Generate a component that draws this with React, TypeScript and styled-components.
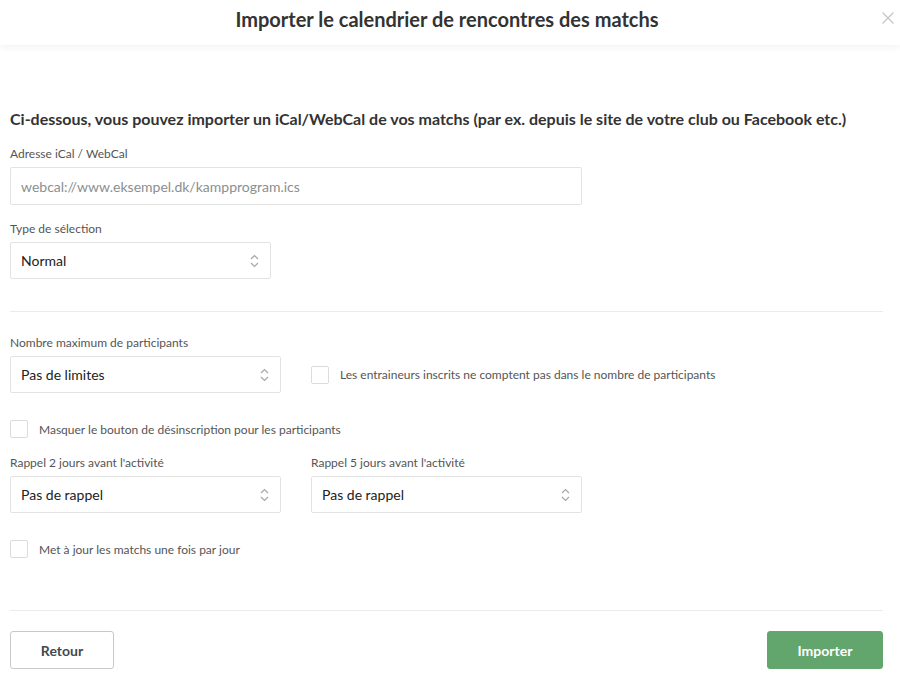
import React from "react";
import styled, { createGlobalStyle } from "styled-components";

const Global = createGlobalStyle`
  html, body { margin: 0; padding: 0; background: #fff; }
  body { font-family: Lato, "Open Sans", sans-serif; color: #333; }
  * { box-sizing: border-box; }
`;

const Modal = styled.div`
  width: 900px;
  display: flex;
  flex-direction: column;
  background: #fff;
`;

const Header = styled.header`
  position: relative;
  flex: none;
  height: 45px;
  padding: 0 6px 8px 0;
  display: flex;
  align-items: center;
  justify-content: center;
  box-shadow: 0 2px 8px rgba(0, 0, 0, 0.06);
  z-index: 1;
`;

const Title = styled.h1`
  margin: 0;
  font-size: 20px;
  line-height: 24px;
  font-weight: 700;
  color: #333;
`;

const Close = styled.button`
  position: absolute;
  right: 4px;
  top: 11px;
  width: 16px;
  height: 16px;
  padding: 0;
  border: none;
  background: none;
  cursor: pointer;
`;

const Body = styled.div`
  padding: 64px 17px 0 10px;
  display: flex;
  flex-direction: column;
`;

const Intro = styled.h2`
  margin: 0 0 18px;
  font-size: 16px;
  font-weight: 700;
  color: #333;
  line-height: 20px;
`;

const Field = styled.div<{ $w?: number }>`
  display: flex;
  flex-direction: column;
  width: ${(p) => (p.$w ? `${p.$w}px` : "auto")};
`;

const Label = styled.label`
  font-size: 12px;
  color: #555;
  line-height: 14px;
  margin-bottom: 6px;
`;

const TextInput = styled.input`
  height: 38px;
  border: 1px solid #e3e3e3;
  border-radius: 2px;
  padding: 0 10px;
  font-family: inherit;
  font-size: 14px;
  color: #333;
  outline: none;
  &::placeholder { color: #8a8f92; }
`;

const SelectBox = styled.div`
  position: relative;
  height: 37px;
  border: 1px solid #e3e3e3;
  border-radius: 2px;
  display: flex;
  align-items: center;
  padding: 0 10px;
  font-size: 14px;
  color: #222;
`;

const Arrows = styled.svg`
  position: absolute;
  right: 11px;
  top: 50%;
  transform: translateY(-50%);
`;

const Row = styled.div<{ $gap?: number; $align?: string }>`
  display: flex;
  gap: ${(p) => p.$gap ?? 30}px;
  align-items: ${(p) => p.$align ?? "flex-start"};
`;

const Divider = styled.hr`
  border: none;
  border-top: 1px solid #ebebeb;
  margin: 0;
`;

const Check = styled.label<{ $h?: number }>`
  display: flex;
  align-items: center;
  gap: 11px;
  height: ${(p) => (p.$h ? `${p.$h}px` : "auto")};
  font-size: 12px;
  color: #555;
  cursor: pointer;
`;

const Box = styled.span`
  width: 18px;
  height: 18px;
  border: 1px solid #dcdcdc;
  border-radius: 2px;
  background: #fff;
  flex: none;
`;

const Spacer = styled.div<{ $h: number }>`
  height: ${(p) => p.$h}px;
  flex: none;
`;

const Footer = styled.div`
  display: flex;
  justify-content: space-between;
  padding: 20px 17px 9px 10px;
`;

const Button = styled.button<{ $primary?: boolean }>`
  height: 38px;
  min-width: ${(p) => (p.$primary ? 116 : 104)}px;
  border-radius: 3px;
  font-family: inherit;
  font-size: 14px;
  font-weight: 700;
  cursor: pointer;
  border: 1px solid ${(p) => (p.$primary ? "#62a66e" : "#c8c8c8")};
  background: ${(p) => (p.$primary ? "#62a66e" : "#fff")};
  color: ${(p) => (p.$primary ? "#fff" : "#414a50")};
`;

const UpDown = () => (
  <Arrows width="9" height="14" viewBox="0 0 9 14" fill="none" stroke="#a6a6a6" strokeWidth="1.2">
    <path d="M1 5 L4.5 1.5 L8 5" />
    <path d="M1 9 L4.5 12.5 L8 9" />
  </Arrows>
);

const Select = ({ value }: { value: string }) => (
  <SelectBox>
    {value}
    <UpDown />
  </SelectBox>
);

export default function App() {
  return (
    <Modal>
      <Global />
      <Header>
        <Title>Importer le calendrier de rencontres des matchs</Title>
        <Close aria-label="Fermer">
          <svg width="14" height="14" viewBox="0 0 14 14" stroke="#c4c4c4" strokeWidth="1.2">
            <path d="M1.5 1.5 L12.5 12.5 M12.5 1.5 L1.5 12.5" />
          </svg>
        </Close>
      </Header>
      <Body>
        <Intro>
          Ci-dessous, vous pouvez importer un iCal/WebCal de vos matchs (par ex. depuis le site de votre club ou Facebook etc.)
        </Intro>
        <Field $w={572}>
          <Label>Adresse iCal / WebCal</Label>
          <TextInput placeholder="webcal://www.eksempel.dk/kampprogram.ics" />
        </Field>
        <Spacer $h={17} />
        <Field $w={261}>
          <Label>Type de sélection</Label>
          <Select value="Normal" />
        </Field>
        <Spacer $h={32} />
        <Divider />
        <Spacer $h={24} />
        <Row $align="flex-end">
          <Field $w={271}>
            <Label>Nombre maximum de participants</Label>
            <Select value="Pas de limites" />
          </Field>
          <Check $h={37}>
            <Box />
            Les entraineurs inscrits ne comptent pas dans le nombre de participants
          </Check>
        </Row>
        <Spacer $h={27} />
        <Check>
          <Box />
          Masquer le bouton de désinscription pour les participants
        </Check>
        <Spacer $h={18} />
        <Row>
          <Field $w={271}>
            <Label>Rappel 2 jours avant l'activité</Label>
            <Select value="Pas de rappel" />
          </Field>
          <Field $w={271}>
            <Label>Rappel 5 jours avant l'activité</Label>
            <Select value="Pas de rappel" />
          </Field>
        </Row>
        <Spacer $h={27} />
        <Check>
          <Box />
          Met à jour les matchs une fois par jour
        </Check>
        <Spacer $h={52} />
        <Divider />
      </Body>
      <Footer>
        <Button>Retour</Button>
        <Button $primary>Importer</Button>
      </Footer>
    </Modal>
  );
}
